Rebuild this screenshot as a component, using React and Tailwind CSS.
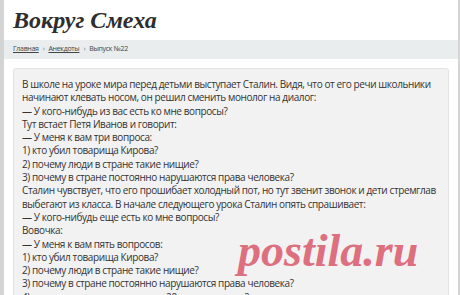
export default function App() {
  const lines = [
    "В школе на уроке мира перед детьми выступает Сталин. Видя, что от его речи школьники",
    "начинают клевать носом, он решил сменить монолог на диалог:",
    "— У кого-нибудь из вас есть ко мне вопросы?",
    "Тут встает Петя Иванов и говорит:",
    "— У меня к вам три вопроса:",
    "1) кто убил товарища Кирова?",
    "2) почему люди в стране такие нищие?",
    "3) почему в стране постоянно нарушаются права человека?",
    "Сталин чувствует, что его прошибает холодный пот, но тут звенит звонок и дети стремглав",
    "выбегают из класса. В начале следующего урока Сталин опять спрашивает:",
    "— У кого-нибудь еще есть ко мне вопросы?",
    "Вовочка:",
    "— У меня к вам пять вопросов:",
    "1) кто убил товарища Кирова?",
    "2) почему люди в стране такие нищие?",
    "3) почему в стране постоянно нарушаются права человека?",
    "4) почему звонок прозвенел на 20 минут раньше?",
    "5) где Петя Иванов?",
  ];
  return (
    <div className="h-[295px] w-[460px] overflow-hidden bg-[#d4d4d4] pl-[4px] pr-[2px]">
      <div className="relative h-full overflow-hidden bg-white">
        <div className="h-[40px] pl-[9px] pt-[6px]">
          <div
            className="text-[24px] font-bold italic leading-[28px] text-[#2e2e2e]"
            style={{ fontFamily: '"Liberation Serif", serif' }}
          >
            Вокруг Смеха
          </div>
        </div>
        <div
          className="flex h-[19px] items-center gap-[4px] bg-[#e9edee] pl-[9px] text-[7px] tracking-[-0.3px] text-[#444]"
          style={{ fontFamily: '"Open Sans", sans-serif' }}
        >
          <span className="underline">Главная</span>
          <span className="text-[#777]">›</span>
          <span className="underline">Анекдоты</span>
          <span className="text-[#777]">›</span>
          <span>Выпуск №22</span>
        </div>
        <div className="pl-[9px] pr-[9px] pt-[9px]">
          <div
            className="rounded-[3px] border border-[#e3e3e3] bg-[#f2f2f2] pl-[8px] pt-[9px] pb-4 text-[10px] leading-[13.3px] tracking-[-0.4px] text-[#333]"
            style={{ fontFamily: '"Open Sans", sans-serif' }}
          >
            {lines.map((l, i) => (
              <div key={i} className="whitespace-nowrap">
                {l}
              </div>
            ))}
          </div>
        </div>
        <div
          className="pointer-events-none absolute left-[234px] top-[223px] text-[46px] font-bold italic leading-[56px] text-[#dd6f7e]"
          style={{ fontFamily: '"Liberation Serif", serif' }}
        >
          postila.ru
        </div>
      </div>
    </div>
  );
}
